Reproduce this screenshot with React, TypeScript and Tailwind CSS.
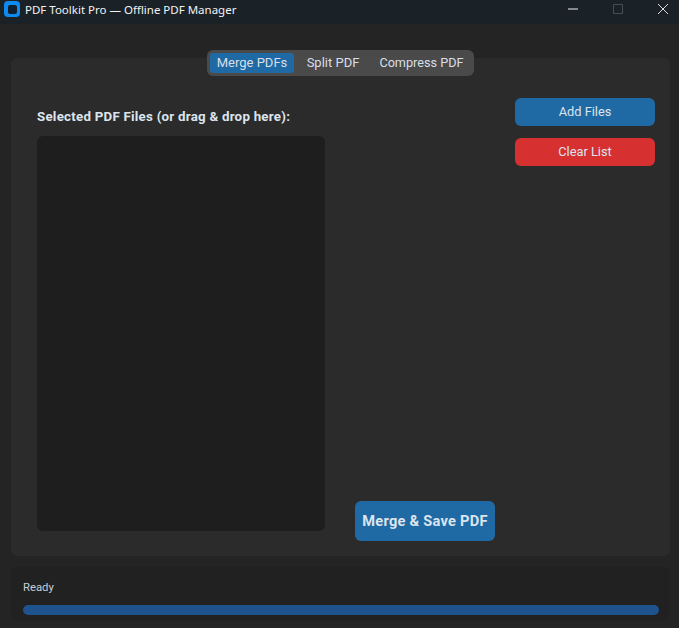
const tabs = ['Merge PDFs', 'Split PDF', 'Compress PDF']

function TitleBar() {
  return (
    <div className="flex h-6 items-start bg-[#1a2127] pl-1 pr-[11px] text-[#f2f2f2]">
      <div className="mt-px flex h-4 w-4 items-center justify-center rounded-[4px] bg-[#0f8bf0]">
        <div className="h-[9px] w-[9px] rounded-[2px] bg-[#10202e]" />
      </div>
      <span className="ml-[5px] font-['Noto_Sans',sans-serif] text-[11.5px] leading-[20px]">
        PDF Toolkit Pro — Offline PDF Manager
      </span>
      <div className="ml-auto mt-1 flex items-center gap-[35px]">
        <svg width="10" height="10" viewBox="0 0 10 10" fill="none" stroke="#f2f2f2">
          <path d="M0 5h10" />
        </svg>
        <svg width="10" height="10" viewBox="0 0 10 10" fill="none" stroke="#474e53">
          <path d="M.5.5h9v9h-9z" />
        </svg>
        <svg width="10" height="10" viewBox="0 0 10 10" fill="none" stroke="#f2f2f2" strokeWidth="0.9">
          <path d="M0 0l10 10M10 0L0 10" />
        </svg>
      </div>
    </div>
  )
}

function TabBar() {
  return (
    <div className="relative z-10 mx-auto flex h-[26px] w-[267px] items-center rounded-[6px] bg-[#4a4a4a] px-[3px] text-[#d8dfe8]">
      {tabs.map((tab, i) => (
        <div
          key={tab}
          className={
            i === 0
              ? 'flex h-[20px] w-[84px] items-center justify-center rounded-[3px] bg-[#1f6aa5] text-[13px]'
              : i === 1
                ? 'flex h-[20px] w-[78px] items-center justify-center text-[13px]'
                : 'flex h-[20px] w-[99px] items-center justify-center text-[12.7px]'
          }
        >
          {tab}
        </div>
      ))}
    </div>
  )
}

function MergePanel() {
  return (
    <div className="-mt-[18px] flex h-[498px] rounded-[6px] bg-[#2b2b2b] pt-10 pb-[15px] pl-[26px] pr-[15px]">
      <div className="flex w-[288px] flex-col">
        <div className="flex h-[38px] items-center text-[13.3px] font-bold tracking-[0.25px] text-[#dce4ee]">
          Selected PDF Files (or drag &amp; drop here):
        </div>
        <div className="mb-[10px] flex-1 rounded-[6px] bg-[#1e1e1e]" />
      </div>
      <div className="flex w-[170px] items-end justify-center pl-[30px]">
        <button className="h-10 w-[140px] rounded-[6px] bg-[#1f6aa5] pt-[2px] text-[14.6px] font-bold tracking-[0.25px] text-[#dce4ee]">
          Merge &amp; Save PDF
        </button>
      </div>
      <div className="ml-5 flex flex-col gap-3">
        <button className="h-7 w-[140px] rounded-[6px] bg-[#1f6aa5] text-[12.8px] text-[#dce4ee]">
          Add Files
        </button>
        <button className="h-7 w-[140px] rounded-[6px] bg-[#d63031] text-[12.8px] text-[#dce4ee]">
          Clear List
        </button>
      </div>
    </div>
  )
}

function StatusPanel() {
  return (
    <div className="mt-[11px] h-[54px] rounded-[6px] bg-[#212121] pl-3 pr-[11px] pt-[14px]">
      <div className="text-[11.3px] leading-[14px] text-[#c8ced6]">Ready</div>
      <div className="mt-[10px] h-[10px] rounded-full bg-[#1f538d]" />
    </div>
  )
}

export default function App() {
  return (
    <div className="h-[628px] w-[679px] overflow-hidden bg-[#242424] font-['Roboto',sans-serif]">
      <TitleBar />
      <div className="pl-[11px] pr-[9px] pt-[26px]">
        <TabBar />
        <MergePanel />
        <StatusPanel />
      </div>
    </div>
  )
}
